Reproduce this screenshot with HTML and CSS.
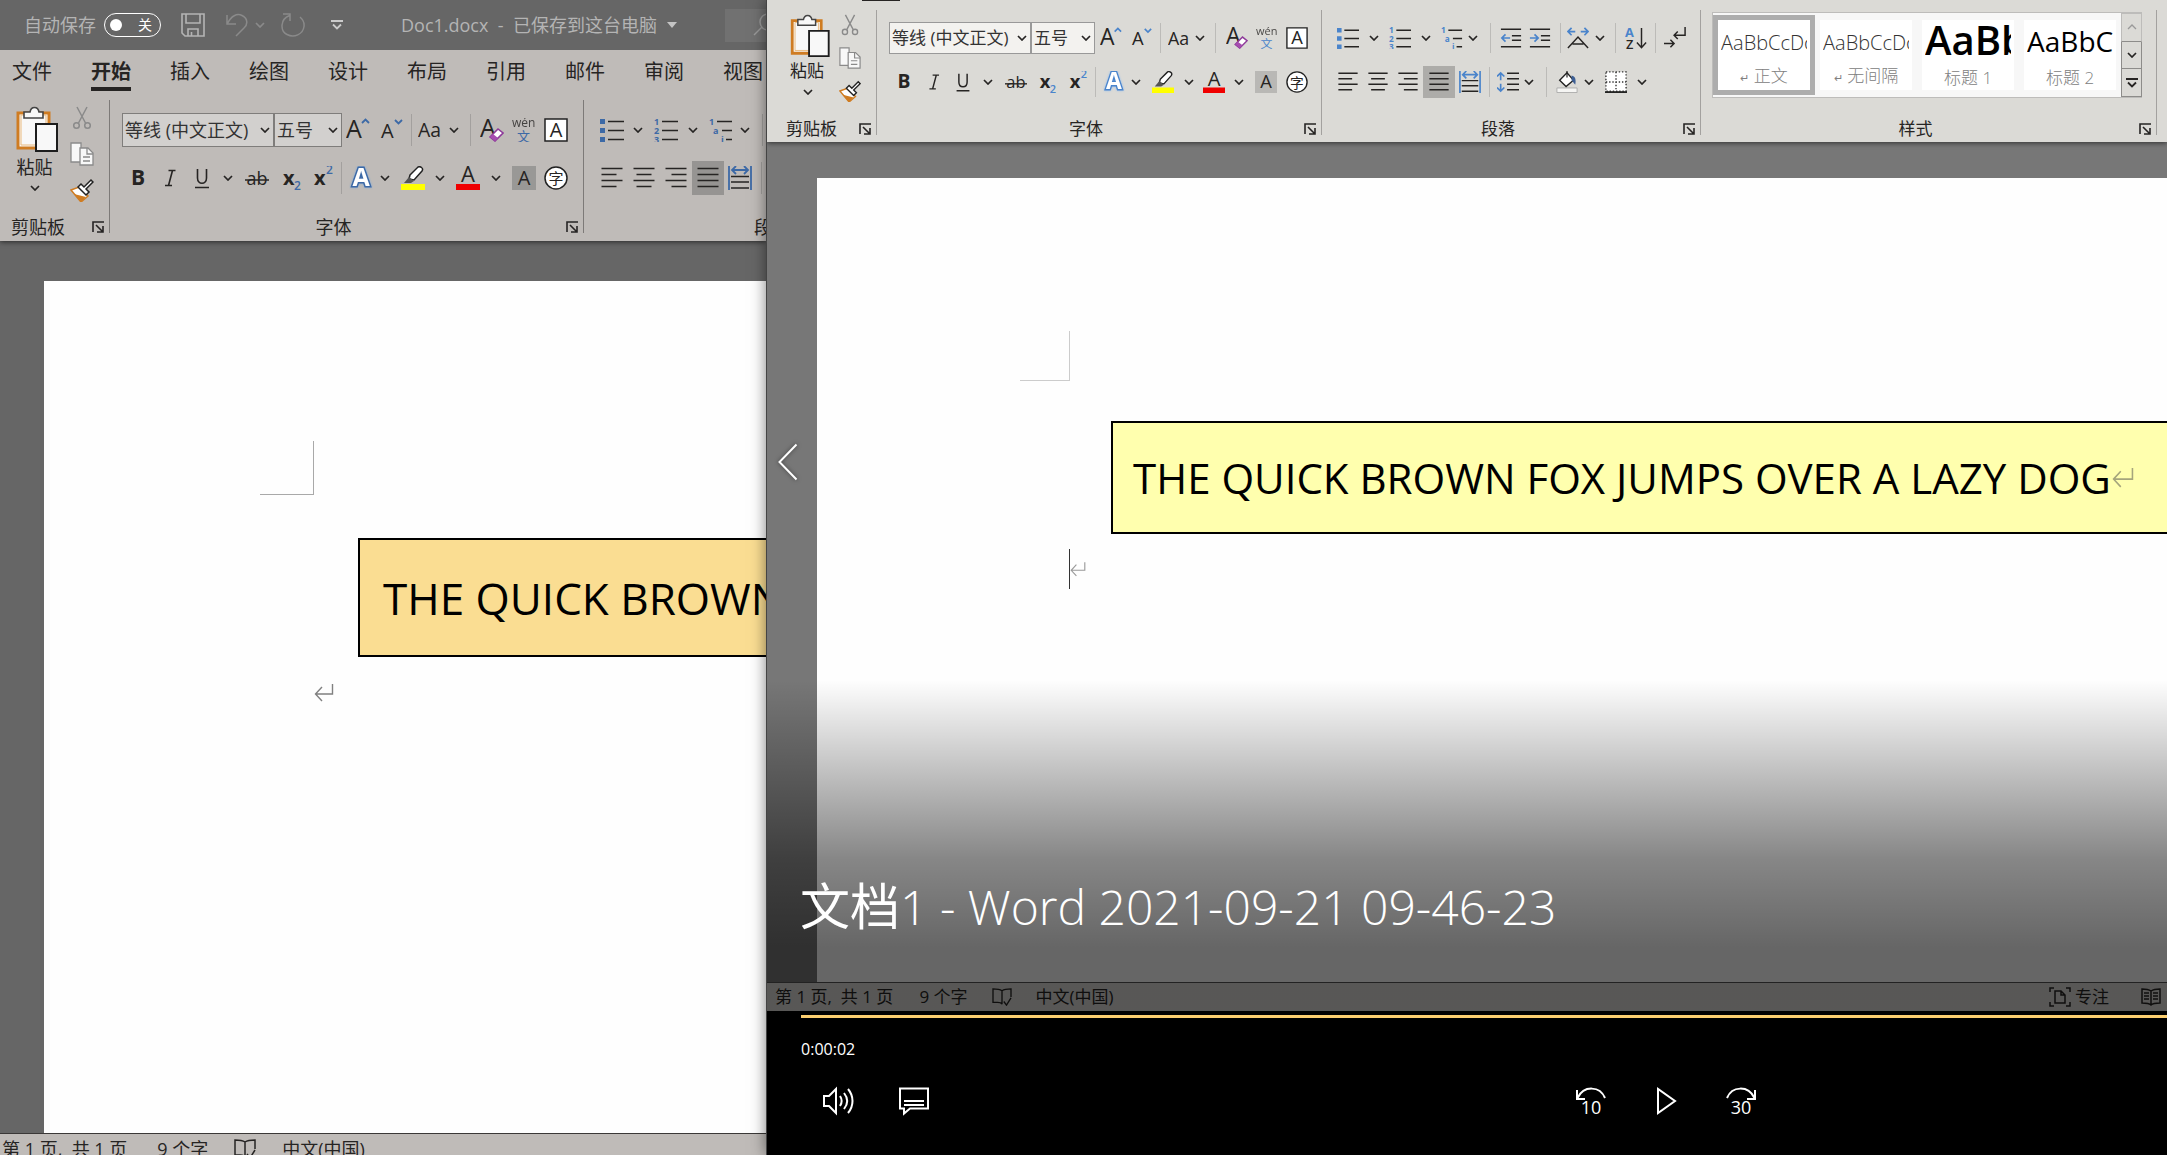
FILE: index.html
```html
<!DOCTYPE html>
<html lang="zh-CN">
<head>
<meta charset="utf-8">
<title>Doc1.docx</title>
<link rel="stylesheet" href="styles.css">
</head>
<body>
<svg class="defs" aria-hidden="true">
  <symbol id="chev" viewBox="0 0 10 6"><path d="M1 1l4 4 4-4" fill="none" stroke="currentColor" stroke-width="1.7"/></symbol>
  <symbol id="chev-up" viewBox="0 0 10 6"><path d="M1 5l4-4 4 4" fill="none" stroke="currentColor" stroke-width="1.3"/></symbol>
  <symbol id="more" viewBox="0 0 12 10"><path d="M0 1h12M2 4.500l4 4 4-4" fill="none" stroke="currentColor" stroke-width="1.800"/></symbol>
  <symbol id="launch" viewBox="0 0 12 12"><path d="M1 11V1h11M4 4l7 7M11 5v6H5" fill="none" stroke="currentColor" stroke-width="1.600"/></symbol>
  <symbol id="save" viewBox="0 0 24 24"><path d="M1 1h22v22H4l-3-3zM5 1v9h14V1M7 23v-7h10v7M10.500 23v-4" fill="none" stroke="currentColor" stroke-width="1.600"/></symbol>
  <symbol id="undo" viewBox="0 0 24 24"><path d="M2 2v9h9M2.500 10.500C6 3 12 0 17 2.500c6 3 6 9 2 12.500l-8 8" fill="none" stroke="currentColor" stroke-width="1.500"/></symbol>
  <symbol id="redo" viewBox="0 0 24 24"><path d="M2 1h7v7M8.500 2.500C-1 6-1 18 6 21.500c7 3.500 16 0 17-8 .5-4-1-7-4-9.500" fill="none" stroke="currentColor" stroke-width="1.500"/></symbol>
  <symbol id="search" viewBox="0 0 24 24"><circle cx="15" cy="9" r="8" fill="none" stroke="currentColor" stroke-width="1.500"/><path d="M9 14L1 22" stroke="currentColor" stroke-width="1.500"/></symbol>
  <symbol id="paste" viewBox="0 0 42 46"><path d="M2 7h31v35H2z" class="paper" stroke="#cf7c22" stroke-width="3"/><path d="M5 9h25v30H5z" class="paper" stroke="#e9b97c" stroke-width="1"/><path d="M8 12V6h6c1-6 8-6 9 0h4v6z" class="paper" stroke="#444" stroke-width="1.600"/><path d="M20 18h21v27H20z" class="paper" stroke="#1d1d1d" stroke-width="2"/></symbol>
  <symbol id="cut" viewBox="0 0 24 24"><path d="M7 1l8.500 16M17 1L8.500 17" stroke="#8a8a8a" stroke-width="1.500"/><circle cx="6.500" cy="19.500" r="2.800" fill="none" stroke="#8a8a8a" stroke-width="1.500"/><circle cx="17.500" cy="19.500" r="2.800" fill="none" stroke="#8a8a8a" stroke-width="1.500"/></symbol>
  <symbol id="copy" viewBox="0 0 24 24"><path d="M1 1h10v19H1z" class="paper" stroke="#8a8a8a" stroke-width="1.300"/><path d="M10 6h8l5 5v12H10z" class="paper" stroke="#8a8a8a" stroke-width="1.300"/><path d="M17 6v6h6M13 15h7M13 19h7" fill="none" stroke="#8a8a8a" stroke-width="1.300"/></symbol>
  <symbol id="painter" viewBox="0 0 24 24"><path d="M1 12l8-3 9 9-7 6z" fill="#fff" stroke="#cf7c22" stroke-width="1.500"/><path d="M4 16l12 3-5 5z" fill="#cf7c22"/><path d="M8 9l3-3 3 3 7-7 2 2-7 7 3 3-3 3z" fill="#fff" stroke="#222" stroke-width="1.500"/></symbol>
  <symbol id="grow" viewBox="0 0 24 24"><text x="0" y="20" font-size="25">A</text><path d="M16 5l3.500-3.500L23 5" class="bl"/></symbol>
  <symbol id="shrink" viewBox="0 0 24 24"><text x="1" y="20" font-size="20">A</text><path d="M15 2l3.500 3.500L22 2" class="bl"/></symbol>
  <symbol id="case" viewBox="0 0 26 24"><text x="0" y="20" font-size="21">Aa</text></symbol>
  <symbol id="clear" viewBox="0 0 24 24"><text x="0" y="19" font-size="25">A</text><path d="M10 19l8-8 5 4-8 8z" fill="#fff" stroke="#8e3a9a" stroke-width="1.600"/><path d="M10 19l3-3 5 4-3 3z" fill="#a64db0"/></symbol>
  <symbol id="wen" viewBox="0 0 24 24"><text x="0" y="9" font-size="12" opacity=".8">wén</text><text x="5" y="23" font-size="13" class="btx">文</text></symbol>
  <symbol id="abox" viewBox="0 0 24 24"><path d="M1 1h22v22H1z" fill="#fff" stroke="#222" stroke-width="1.500"/><text x="12" y="19" font-size="20" text-anchor="middle">A</text></symbol>
  <symbol id="bold" viewBox="0 0 24 24"><text x="12" y="19" font-size="21" font-weight="700" text-anchor="middle">B</text></symbol>
  <symbol id="italic" viewBox="0 0 24 24"><path d="M10.500 4.500h7M7 19.500h7M14.500 4.500l-4 15" fill="none" stroke="currentColor" stroke-width="1.600"/></symbol>
  <symbol id="underline" viewBox="0 0 24 24"><path d="M7.500 3v9c0 7 9 7 9 0V3M5 21.500h14" fill="none" stroke="currentColor" stroke-width="1.600"/></symbol>
  <symbol id="strike" viewBox="0 0 24 24"><text x="12" y="19" font-size="18" text-anchor="middle">ab</text><path d="M0 14h24" stroke="currentColor" stroke-width="1.500"/></symbol>
  <symbol id="sub" viewBox="0 0 24 24"><text x="3" y="19" font-size="20" font-weight="700">x</text><text x="14" y="24" font-size="12" font-weight="600" class="btx">2</text></symbol>
  <symbol id="sup" viewBox="0 0 24 24"><text x="3" y="19" font-size="20" font-weight="700">x</text><text x="15" y="8" font-size="12" font-weight="600" class="btx">2</text></symbol>
  <symbol id="effect" viewBox="0 0 24 24"><text x="12" y="20" font-size="25" font-weight="700" text-anchor="middle" class="fx">A</text></symbol>
  <symbol id="marker" viewBox="0 0 24 24"><path d="M0 18h24v6H0z" fill="#ff0"/><path d="M9 9l8-8c2-1 6 1 4 4l-8 9-5-1z" fill="#fff" stroke="#222" stroke-width="1.500"/><path d="M3 17l5-6 5 4-3 2z" fill="#555"/></symbol>
  <symbol id="color" viewBox="0 0 24 24"><path d="M0 18h24v6H0z" fill="#f00000"/><text x="12" y="16" font-size="22" text-anchor="middle">A</text></symbol>
  <symbol id="shade" viewBox="0 0 24 24"><path d="M0 0h24v24H0z" class="sh"/><text x="12" y="19" font-size="20" text-anchor="middle">A</text></symbol>
  <symbol id="ring" viewBox="0 0 24 24"><circle cx="12" cy="12" r="11" fill="#fff" stroke="#222" stroke-width="1.500"/><text x="12" y="18" font-size="15" text-anchor="middle">字</text></symbol>
  <symbol id="bullets" viewBox="0 0 24 24"><path d="M0 1h5v5H0zM0 10h5v5H0zM0 19h5v5H0z" class="bf"/><path d="M8 3.500h16M8 12.500h16M8 21.500h16" class="ln"/></symbol>
  <symbol id="numbers" viewBox="0 0 24 24"><g class="btx" font-size="9" font-weight="700"><text x="0" y="7">1</text><text x="0" y="16">2</text><text x="0" y="25">3</text></g><path d="M8 3.500h16M8 12.500h16M8 21.500h16" class="ln"/></symbol>
  <symbol id="multi" viewBox="0 0 24 24"><g class="btx" font-size="9" font-weight="700"><text x="0" y="7">1</text><text x="4" y="16">a</text><text x="12" y="25">i</text></g><path d="M8 3.500h15M13 12.500h10M17 21.500h6" class="ln"/></symbol>
  <symbol id="outdent" viewBox="0 0 24 24"><path d="M1 2.500h22M13 9.500h10M13 14.500h10M1 21.500h22" class="ln"/><path d="M11 12H2M6 8l-4 4 4 4" class="bl"/></symbol>
  <symbol id="indent" viewBox="0 0 24 24"><path d="M1 2.500h22M13 9.500h10M13 14.500h10M1 21.500h22" class="ln"/><path d="M1 12h9M6 8l4 4-4 4" class="bl"/></symbol>
  <symbol id="cjk" viewBox="0 0 24 24"><path d="M1 23L12 11l11 12M6 18.500h12" class="ln"/><path d="M1 5h8M5 1L1 5l4 4M15 5h8M19 1l4 4-4 4" class="bl"/></symbol>
  <symbol id="sort" viewBox="0 0 24 24"><text x="0" y="11" font-size="14" font-weight="700" class="btx">A</text><text x="1" y="24" font-size="14" font-weight="600">Z</text><path d="M18 1v21M13 17l5 5.500 5-5.500" class="ln"/></symbol>
  <symbol id="marks" viewBox="0 0 24 24"><path d="M23 0v9H11M15 5l-4 4 4 4M0 18h11M7 14l4 4-4 4" class="ln"/></symbol>
  <symbol id="al" viewBox="0 0 24 24"><path d="M1.500 2.500h21M1.500 8.500h15M1.500 14.500h21M1.500 20.500h15" class="ln"/></symbol>
  <symbol id="ac" viewBox="0 0 24 24"><path d="M1.500 2.500h21M4.500 8.500h15M1.500 14.500h21M4.500 20.500h15" class="ln"/></symbol>
  <symbol id="ar" viewBox="0 0 24 24"><path d="M1.500 2.500h21M7.500 8.500h15M1.500 14.500h21M7.500 20.500h15" class="ln"/></symbol>
  <symbol id="aj" viewBox="0 0 24 24"><path d="M1.500 2.500h21M1.500 8.500h21M1.500 14.500h21M1.500 20.500h21" class="ln"/></symbol>
  <symbol id="dist" viewBox="0 0 24 24"><path d="M3 10.500h18M3 16h18M3 22h18" class="ln"/><path d="M1 0v24M23 0v24M4 4h16M8 0L4 4l4 4M16 0l4 4-4 4" class="bl"/></symbol>
  <symbol id="spacing" viewBox="0 0 24 24"><path d="M11 2.500h13M11 8.500h13M11 14.500h13M11 20.500h13" class="ln"/><path d="M4 2v8M0 6l4-4 4 4M4 14v8M0 18l4 4 4-4" class="bl"/></symbol>
  <symbol id="bucket" viewBox="0 0 24 24"><path d="M1 18.500h22v5H1z" fill="#f5f5f3" stroke="#aaa"/><path d="M4 10l8-8 7 8-8 7z" fill="#fff" stroke="#222" stroke-width="1.500"/><path d="M12 0v7" stroke="#222" stroke-width="1.300"/><path d="M17 5c4 1 5 4 4 10l-4-5z" fill="#3d5f94"/></symbol>
  <symbol id="borders" viewBox="0 0 24 24"><path d="M1 1h22v21H1z" fill="#fff" stroke="#333" stroke-width="1.500" stroke-dasharray="1.500 2"/><path d="M12 1v21M1 12h22" stroke="#333" stroke-width="1.500" stroke-dasharray="1.500 2"/><path d="M0 23h24" stroke="#111" stroke-width="1.800"/></symbol>
  <symbol id="enter" viewBox="0 0 20 18"><path d="M18.500 0v10H2M8 3l-6.500 7L8 17" fill="none" stroke="currentColor" stroke-width="1.400"/></symbol>
  <symbol id="book" viewBox="0 0 22 20"><path d="M11 3C8 1 5 1 1 1v15h5c2 0 4 0 5 2M11 3v15M11 3c3-2 6-2 10-2v9M13 15l3 4 5-8" fill="none" stroke="currentColor" stroke-width="1.500"/></symbol>
  <symbol id="focus" viewBox="0 0 22 20"><path d="M5 1H1v4M17 1h4v4M5 19H1v-4M17 19h4v-4M6 4h6l4 4v8H6zM12 4v4h4" fill="none" stroke="currentColor" stroke-width="1.500"/></symbol>
  <symbol id="read" viewBox="0 0 20 18"><path d="M10 3C7 1 4 1 1 1v14c4 0 7 0 9 2 2-2 5-2 9-2V1c-3 0-6 0-9 2zM10 3v14M3 5h5M3 8h5M3 11h5M12 5h5M12 8h5M12 11h5" fill="none" stroke="currentColor" stroke-width="1.500"/></symbol>
</svg>

<main class="desktop">
  <section class="win" aria-label="Doc1.docx">
    <header class="titlebar">
      <span>自动保存</span>
      <label class="toggle"><input type="checkbox" aria-label="自动保存"><span>关</span></label>
      <button class="qa save" aria-label="保存"><svg><use href="#save"/></svg></button>
      <button class="qa undo dim" aria-label="撤消"><svg><use href="#undo"/></svg></button>
      <button class="qa drop dim" aria-label="撤消选项"><svg class="cv"><use href="#chev"/></svg></button>
      <button class="qa redo dim" aria-label="重复"><svg><use href="#redo"/></svg></button>
      <button class="qa custom" aria-label="自定义"><svg class="mo"><use href="#more"/></svg></button>
      <button class="docname">Doc1.docx&nbsp; -&nbsp; 已保存到这台电脑<i></i></button>
      <button class="searchbox" aria-label="搜索"><svg><use href="#search"/></svg></button>
    </header>
    <nav class="tabs">
      <a href="#">文件</a><a href="#" class="on">开始</a><a href="#">插入</a><a href="#">绘图</a><a href="#">设计</a><a href="#">布局</a><a href="#">引用</a><a href="#">邮件</a><a href="#">审阅</a><a href="#">视图</a>
    </nav>
    <div class="ribbon">
      <div class="group clip">
        <div class="clipbody">
          <button class="paste"><svg><use href="#paste"/></svg><span>粘贴</span><svg class="cv"><use href="#chev"/></svg></button>
          <div class="stack">
            <button aria-label="剪切"><svg class="ic"><use href="#cut"/></svg></button>
            <button aria-label="复制"><svg class="ic"><use href="#copy"/></svg></button>
            <button aria-label="格式刷"><svg class="ic"><use href="#painter"/></svg></button>
          </div>
        </div>
        <div class="foot"><span>剪贴板</span><button aria-label="剪贴板设置"><svg class="la"><use href="#launch"/></svg></button></div>
      </div>
      <div class="group font">
        <div class="row r1">
          <label class="combo"><select aria-label="字体"><option>等线 (中文正文)</option></select><svg class="cv"><use href="#chev"/></svg></label>
          <label class="combo"><select aria-label="字号"><option>五号</option></select><svg class="cv"><use href="#chev"/></svg></label>
          <button aria-label="增大字号"><svg class="ic"><use href="#grow"/></svg></button>
          <button aria-label="减小字号"><svg class="ic"><use href="#shrink"/></svg></button>
          <i class="sep"></i>
          <button aria-label="更改大小写"><svg class="ic"><use href="#case"/></svg></button>
          <button aria-label="大小写选项"><svg class="cv"><use href="#chev"/></svg></button>
          <i class="sep"></i>
          <button aria-label="清除格式"><svg class="ic"><use href="#clear"/></svg></button>
          <button aria-label="拼音指南"><svg class="ic"><use href="#wen"/></svg></button>
          <button aria-label="字符边框"><svg class="ic"><use href="#abox"/></svg></button>
        </div>
        <div class="row r2">
          <button aria-label="加粗"><svg class="ic"><use href="#bold"/></svg></button>
          <button aria-label="倾斜"><svg class="ic"><use href="#italic"/></svg></button>
          <button aria-label="下划线"><svg class="ic"><use href="#underline"/></svg></button>
          <button aria-label="下划线选项"><svg class="cv"><use href="#chev"/></svg></button>
          <button aria-label="删除线"><svg class="ic"><use href="#strike"/></svg></button>
          <button aria-label="下标"><svg class="ic"><use href="#sub"/></svg></button>
          <button aria-label="上标"><svg class="ic"><use href="#sup"/></svg></button>
          <i class="sep"></i>
          <button aria-label="文本效果"><svg class="ic"><use href="#effect"/></svg></button>
          <button aria-label="效果选项"><svg class="cv"><use href="#chev"/></svg></button>
          <button aria-label="突出显示"><svg class="ic"><use href="#marker"/></svg></button>
          <button aria-label="突出显示选项"><svg class="cv"><use href="#chev"/></svg></button>
          <button aria-label="字体颜色"><svg class="ic"><use href="#color"/></svg></button>
          <button aria-label="颜色选项"><svg class="cv"><use href="#chev"/></svg></button>
          <button aria-label="字符底纹"><svg class="ic"><use href="#shade"/></svg></button>
          <button aria-label="带圈字符"><svg class="ic"><use href="#ring"/></svg></button>
        </div>
        <div class="foot"><span>字体</span><button aria-label="字体设置"><svg class="la"><use href="#launch"/></svg></button></div>
      </div>
      <div class="group para">
        <div class="row r1">
          <button aria-label="项目符号"><svg class="ic"><use href="#bullets"/></svg></button>
          <button aria-label="符号选项"><svg class="cv"><use href="#chev"/></svg></button>
          <button aria-label="编号"><svg class="ic"><use href="#numbers"/></svg></button>
          <button aria-label="编号选项"><svg class="cv"><use href="#chev"/></svg></button>
          <button aria-label="多级列表"><svg class="ic"><use href="#multi"/></svg></button>
          <button aria-label="列表选项"><svg class="cv"><use href="#chev"/></svg></button>
          <i class="sep"></i>
        </div>
        <div class="row r2">
          <button aria-label="左对齐"><svg class="ic"><use href="#al"/></svg></button>
          <button aria-label="居中"><svg class="ic"><use href="#ac"/></svg></button>
          <button aria-label="右对齐"><svg class="ic"><use href="#ar"/></svg></button>
          <button class="pressed" aria-label="两端对齐"><svg class="ic"><use href="#aj"/></svg></button>
          <button aria-label="分散对齐"><svg class="ic"><use href="#dist"/></svg></button>
          <i class="sep"></i>
        </div>
        <div class="foot"><span>段落</span><button aria-label="段落设置"><svg class="la"><use href="#launch"/></svg></button></div>
      </div>
    </div>
    <div class="canvas">
      <article class="page">
        <div class="corner"></div>
        <p class="textbox">THE QUICK BROWN FOX JUMPS OVER A LAZY DOG</p>
        <p class="para-end"><svg class="en"><use href="#enter"/></svg></p>
      </article>
    </div>
    <footer class="status"><span>第 1 页,&nbsp; 共 1 页</span><span>9 个字</span><svg class="bk"><use href="#book"/></svg><span>中文(中国)</span></footer>
  </section>

  <section class="player" aria-label="视频">
    <div class="video">
      <div class="ribbon">
        <i class="tabmark"></i>
        <div class="group clip">
          <div class="clipbody">
            <button class="paste"><svg><use href="#paste"/></svg><span>粘贴</span><svg class="cv"><use href="#chev"/></svg></button>
            <div class="stack">
              <button aria-label="剪切"><svg class="ic"><use href="#cut"/></svg></button>
              <button aria-label="复制"><svg class="ic"><use href="#copy"/></svg></button>
              <button aria-label="格式刷"><svg class="ic"><use href="#painter"/></svg></button>
            </div>
          </div>
          <div class="foot"><span>剪贴板</span><button aria-label="剪贴板设置"><svg class="la"><use href="#launch"/></svg></button></div>
        </div>
        <div class="group font">
          <div class="row r1">
            <label class="combo"><select aria-label="字体"><option>等线 (中文正文)</option></select><svg class="cv"><use href="#chev"/></svg></label>
            <label class="combo"><select aria-label="字号"><option>五号</option></select><svg class="cv"><use href="#chev"/></svg></label>
            <button aria-label="增大字号"><svg class="ic"><use href="#grow"/></svg></button>
            <button aria-label="减小字号"><svg class="ic"><use href="#shrink"/></svg></button>
            <i class="sep"></i>
            <button aria-label="更改大小写"><svg class="ic"><use href="#case"/></svg></button>
            <button aria-label="大小写选项"><svg class="cv"><use href="#chev"/></svg></button>
            <i class="sep"></i>
            <button aria-label="清除格式"><svg class="ic"><use href="#clear"/></svg></button>
            <button aria-label="拼音指南"><svg class="ic"><use href="#wen"/></svg></button>
            <button aria-label="字符边框"><svg class="ic"><use href="#abox"/></svg></button>
          </div>
          <div class="row r2">
            <button aria-label="加粗"><svg class="ic"><use href="#bold"/></svg></button>
            <button aria-label="倾斜"><svg class="ic"><use href="#italic"/></svg></button>
            <button aria-label="下划线"><svg class="ic"><use href="#underline"/></svg></button>
            <button aria-label="下划线选项"><svg class="cv"><use href="#chev"/></svg></button>
            <button aria-label="删除线"><svg class="ic"><use href="#strike"/></svg></button>
            <button aria-label="下标"><svg class="ic"><use href="#sub"/></svg></button>
            <button aria-label="上标"><svg class="ic"><use href="#sup"/></svg></button>
            <i class="sep"></i>
            <button aria-label="文本效果"><svg class="ic"><use href="#effect"/></svg></button>
            <button aria-label="效果选项"><svg class="cv"><use href="#chev"/></svg></button>
            <button aria-label="突出显示"><svg class="ic"><use href="#marker"/></svg></button>
            <button aria-label="突出显示选项"><svg class="cv"><use href="#chev"/></svg></button>
            <button aria-label="字体颜色"><svg class="ic"><use href="#color"/></svg></button>
            <button aria-label="颜色选项"><svg class="cv"><use href="#chev"/></svg></button>
            <button aria-label="字符底纹"><svg class="ic"><use href="#shade"/></svg></button>
            <button aria-label="带圈字符"><svg class="ic"><use href="#ring"/></svg></button>
          </div>
          <div class="foot"><span>字体</span><button aria-label="字体设置"><svg class="la"><use href="#launch"/></svg></button></div>
        </div>
        <div class="group para">
          <div class="row r1">
            <button aria-label="项目符号"><svg class="ic"><use href="#bullets"/></svg></button>
            <button aria-label="符号选项"><svg class="cv"><use href="#chev"/></svg></button>
            <button aria-label="编号"><svg class="ic"><use href="#numbers"/></svg></button>
            <button aria-label="编号选项"><svg class="cv"><use href="#chev"/></svg></button>
            <button aria-label="多级列表"><svg class="ic"><use href="#multi"/></svg></button>
            <button aria-label="列表选项"><svg class="cv"><use href="#chev"/></svg></button>
            <i class="sep"></i>
            <button aria-label="减少缩进"><svg class="ic"><use href="#outdent"/></svg></button>
            <button aria-label="增加缩进"><svg class="ic"><use href="#indent"/></svg></button>
            <i class="sep"></i>
            <button aria-label="中文版式"><svg class="ic"><use href="#cjk"/></svg></button>
            <button aria-label="版式选项"><svg class="cv"><use href="#chev"/></svg></button>
            <i class="sep"></i>
            <button aria-label="排序"><svg class="ic"><use href="#sort"/></svg></button>
            <i class="sep"></i>
            <button aria-label="显示编辑标记"><svg class="ic"><use href="#marks"/></svg></button>
          </div>
          <div class="row r2">
            <button aria-label="左对齐"><svg class="ic"><use href="#al"/></svg></button>
            <button aria-label="居中"><svg class="ic"><use href="#ac"/></svg></button>
            <button aria-label="右对齐"><svg class="ic"><use href="#ar"/></svg></button>
            <button class="pressed" aria-label="两端对齐"><svg class="ic"><use href="#aj"/></svg></button>
            <button aria-label="分散对齐"><svg class="ic"><use href="#dist"/></svg></button>
            <i class="sep"></i>
            <button aria-label="行距"><svg class="ic"><use href="#spacing"/></svg></button>
            <button aria-label="行距选项"><svg class="cv"><use href="#chev"/></svg></button>
            <i class="sep"></i>
            <button aria-label="底纹"><svg class="ic"><use href="#bucket"/></svg></button>
            <button aria-label="底纹选项"><svg class="cv"><use href="#chev"/></svg></button>
            <button aria-label="边框"><svg class="ic"><use href="#borders"/></svg></button>
            <button aria-label="边框选项"><svg class="cv"><use href="#chev"/></svg></button>
          </div>
          <div class="foot"><span>段落</span><button aria-label="段落设置"><svg class="la"><use href="#launch"/></svg></button></div>
        </div>
        <div class="group styles">
          <div class="gallery">
            <button class="style sel"><b>AaBbCcDc</b><span><small>↵</small> 正文</span></button>
            <button class="style"><b>AaBbCcDc</b><span><small>↵</small> 无间隔</span></button>
            <button class="style h1"><b>AaBb</b><span>标题 1</span></button>
            <button class="style h2"><b>AaBbC</b><span>标题 2</span></button>
            <div class="scroll">
              <button class="off" aria-label="上一行"><svg class="cv"><use href="#chev-up"/></svg></button>
              <button aria-label="下一行"><svg class="cv"><use href="#chev"/></svg></button>
              <button aria-label="其他"><svg class="mo"><use href="#more"/></svg></button>
            </div>
          </div>
          <div class="foot"><span>样式</span><button aria-label="样式设置"><svg class="la"><use href="#launch"/></svg></button></div>
        </div>
      </div>
      <div class="canvas">
        <article class="page">
          <div class="corner"></div>
          <p class="textbox">THE QUICK BROWN FOX JUMPS OVER A LAZY DOG<svg class="en"><use href="#enter"/></svg></p>
          <p class="para-end"><i class="caret"></i><svg class="en"><use href="#enter"/></svg></p>
        </article>
      </div>
      <footer class="status"><span>第 1 页,&nbsp; 共 1 页</span><span>9 个字</span><svg class="bk"><use href="#book"/></svg><span>中文(中国)</span><svg class="fo"><use href="#focus"/></svg><span class="fotext">专注</span><svg class="rd"><use href="#read"/></svg></footer>
      <div class="dimmer"></div>
      <h1 class="vtitle"><b>文档</b>1 - Word 2021-09-21 09-46-23</h1>
    </div>
    <button class="back" aria-label="返回"><svg viewBox="0 0 22 38"><path d="M19.500 1.500L2.500 19l17 17.500" fill="none" stroke="#fff" stroke-width="2"/></svg></button>
    <div class="controls">
      <input class="seek" type="range" aria-label="进度">
      <time>0:00:02</time>
      <div class="buttons">
        <div class="side">
          <button aria-label="音量"><svg viewBox="0 0 32 28"><path d="M1 9h5l7-7v24l-7-7H1zM17 9c2 3 2 7 0 10M21 6c4 5 4 11 0 16M25 2c6 7 6 17 0 24" fill="none" stroke="#fff" stroke-width="2"/></svg></button>
          <button aria-label="字幕"><svg viewBox="0 0 32 28"><path d="M2 1.500h28v20H12l-6 5v-5H2zM6 14h20M6 18h20" fill="none" stroke="#fff" stroke-width="2"/></svg></button>
        </div>
        <div class="transport">
          <button aria-label="后退 10 秒"><svg viewBox="0 0 32 28"><path d="M2 3v9h8M2.500 11C9-2 25-1 30 11" fill="none" stroke="#fff" stroke-width="2"/><text x="16" y="27" font-size="18" text-anchor="middle">10</text></svg></button>
          <button aria-label="播放"><svg viewBox="0 0 32 28"><path d="M8 2v24l17-12z" fill="none" stroke="#fff" stroke-width="2"/></svg></button>
          <button aria-label="前进 30 秒"><svg viewBox="0 0 32 28"><path d="M30 3v9h-8M29.500 11C23-2 7-1 2 11" fill="none" stroke="#fff" stroke-width="2"/><text x="16" y="27" font-size="18" text-anchor="middle">30</text></svg></button>
        </div>
      </div>
    </div>
  </section>
</main>
</body>
</html>
```
FILE: styles.css
```css
* { box-sizing: border-box; }
body {
  margin: 0;
  background: #000;
  font-family: "Open Sans", "Noto Sans CJK SC", sans-serif;
  font-size: 18px;
  line-height: 24px;
  color: #262423;
}
p, h1 { margin: 0; font-weight: 400; }
button {
  border: 0;
  padding: 0;
  background: none;
  font: inherit;
  color: inherit;
  display: flex;
  align-items: center;
  justify-content: center;
}
a { color: inherit; text-decoration: none; }
svg { display: block; flex: none; overflow: visible; }
svg text { font-family: "Open Sans", "Noto Sans CJK SC", sans-serif; fill: currentColor; }
.defs { display: none; }

/* icon parts */
.bl { fill: none; stroke: var(--blue); stroke-width: 1.8px; }
.bf, svg .btx, svg .btx text { fill: var(--blue); }
.ln { fill: none; stroke: currentColor; stroke-width: 1.6px; }
.paper { fill: #f8f8f8; }
.sh { fill: var(--shade); }
svg .fx {
  fill: #fff;
  stroke: var(--blue);
  stroke-width: 3px;
  paint-order: stroke;
  filter: drop-shadow(0 0 1px var(--glow));
}
.ic { width: var(--ic); height: var(--ic); }
.cv { width: 10px; height: 6px; }
.mo { width: 12px; height: 10px; }
.la { width: 12px; height: 12px; }

.desktop {
  display: grid;
  grid-template-columns: 35.35% minmax(0, 1fr);
  height: 100vh;
  overflow: hidden;
}

/* document window */
.win {
  --ic: 24px;
  --blue: #3c69a6;
  --glow: #7fa9d8;
  --shade: #999896;
  display: flex;
  flex-direction: column;
  min-width: 0;
  overflow: hidden;
  background: #666;
}
.titlebar {
  display: flex;
  align-items: center;
  height: 50px;
  flex: none;
  padding-left: 24px;
  color: #b4b4b4;
  white-space: nowrap;
}
.toggle {
  display: flex;
  align-items: center;
  justify-content: space-between;
  width: 57px;
  height: 24px;
  margin-left: 8px;
  padding: 0 8px 0 5px;
  border: 1px solid #fff;
  border-radius: 12px;
  color: #fff;
  font-size: 14px;
}
.toggle input {
  appearance: none;
  width: 12px;
  height: 12px;
  margin: 0;
  border-radius: 50%;
  background: #fff;
}
.qa svg { width: 24px; height: 24px; }
.qa .cv { width: 10px; height: 6px; }
.qa .mo { width: 12px; height: 10px; }
.save { margin-left: 20px; }
.undo { margin-left: 20px; }
.drop { margin-left: 6px; }
.redo { margin-left: 16px; }
.custom { margin-left: 26px; color: #ccc; }
.dim { color: #8a8a8a; }
.docname { margin-left: 58px; flex: none; }
.docname i {
  margin-left: 10px;
  border: 5px solid transparent;
  border-top: 6px solid #c4c4c4;
  border-bottom: 0;
}
.searchbox {
  margin-left: auto;
  width: 41px;
  height: 33px;
  flex: none;
  justify-content: flex-start;
  padding-left: 28px;
  background: #717171;
  color: #9a9a9a;
}
.searchbox svg { width: 24px; height: 24px; }
.tabs {
  position: relative;
  z-index: 2;
  display: flex;
  gap: 39px;
  height: 50px;
  flex: none;
  padding: 8px 0 0 12px;
  background: #bfbbb8;
  font-size: 20px;
  line-height: 28px;
  white-space: nowrap;
}
.tabs a { height: 33px; flex: none; }
.tabs .on { font-weight: 700; border-bottom: 4px solid #262423; }

/* ribbon */
.ribbon {
  display: flex;
  flex: none;
  background: #bfbbb8;
  box-shadow: 0 1px 5px rgba(0, 0, 0, .6);
  z-index: 1;
}
.group {
  flex: none;
  padding: 13px 0 0 12px;
  background: linear-gradient(#7d7a78, #7d7a78) right 0 top 0 / 1px 133px no-repeat;
}
.row { display: grid; align-items: center; justify-items: center; height: 34px; }
.row + .row { margin-top: 14px; }
.row button { width: 100%; height: 100%; }
.row .pressed { background: #969492; }
.sep { width: 1px; height: 32px; background: #a3a09e; }
.foot { display: flex; align-items: center; height: 28px; margin-top: 18px; }
.foot span { flex: 1; text-align: center; white-space: nowrap; }
.foot button { width: 14px; margin-right: 5px; }
.combo { display: grid; align-items: center; width: 100%; height: 100%; }
.combo select {
  grid-area: 1 / 1;
  appearance: none;
  width: 100%;
  height: 100%;
  margin: 0;
  padding: 0 0 0 2px;
  border: 1px solid #7f7d7b;
  border-radius: 0;
  background: #d2d0ce;
  font: inherit;
  color: #333;
}
.combo .cv { grid-area: 1 / 1; justify-self: end; margin-right: 4px; pointer-events: none; }

.clip { width: 110px; padding: 6px 0 0 13px; }
.clipbody { display: flex; gap: 10px; height: 102px; }
.paste { flex-direction: column; justify-content: flex-start; width: 47px; }
.paste svg { width: 42px; height: 46px; }
.paste span { margin: 3px 4px 6px 0; }
.paste .cv { width: 10px; height: 6px; margin-right: 4px; }
.stack { display: flex; flex-direction: column; gap: 12px; }
.clip .foot { margin: 5px 0 0 -2px; }
.foot span { padding-right: 8px; }
.clip .foot span { text-align: left; padding: 0; }
.font { width: 474px; }
.font .r1 { grid-template-columns: 152px 68px 32px 36px 2px 36px 12px 20px 24px 40px 24px; }
.font .r2 { grid-template-columns: 32px 32px 32px 20px 38px 32px 30px 6px 34px 14px 42px 12px 44px 12px 44px 20px; }
.para { width: 403px; }
.font .foot, .para .foot { margin-left: -12px; }
.para .r1 { grid-template-columns: 32px 20px 36px 18px 38px 10px 24px; }
.para .r2 { grid-template-columns: 32px 32px 32px 32px 32px 10px; }

/* document */
.canvas { flex: 1; min-height: 0; display: flex; padding: 40px 0 0 44px; background: #666; overflow: hidden; }
.page { flex: 1; min-width: 0; padding: 160px 0 0 216px; background: #fefefe; }
.corner { width: 54px; height: 54px; border: solid #a9a9a9; border-width: 0 1px 1px 0; }
.textbox {
  display: flex;
  align-items: center;
  height: 119px;
  margin: 43px 0 0 98px;
  padding-left: 23px;
  border: 2px solid #000;
  border-right: 0;
  background: #fadd92;
  color: #000;
  font-size: 44px;
  line-height: 60px;
  white-space: nowrap;
  overflow: hidden;
}
.para-end { display: flex; margin: 27px 0 0 54px; color: #808080; }
.en { width: 20px; height: 18px; }
.status {
  display: flex;
  align-items: center;
  height: 22px;
  flex: none;
  padding: 8px 0 0 2px;
  border-top: 1px solid #3a3837;
  background: #bfbbb8;
  line-height: 24px;
  white-space: nowrap;
}
.status span + span { margin-left: 30px; }
.bk { width: 22px; height: 20px; margin: 0 26px; }

/* player */
.player {
  --ic: 22px;
  --blue: #4a84cb;
  --glow: #8fbcf0;
  --shade: #b9b8b5;
  position: relative;
  z-index: 3;
  display: flex;
  flex-direction: column;
  min-width: 0;
  border-left: 1px solid #444;
  background: #000;
  box-shadow: 0 0 14px rgba(0, 0, 0, .5);
}
.video { position: relative; flex: 1; min-height: 0; display: flex; flex-direction: column; overflow: hidden; }
.player .ribbon { position: relative; background: #dbdad6; font-size: 17px; }
.tabmark { position: absolute; left: 95px; top: 0; width: 38px; height: 1px; background: #262423; }
.player .group {
  padding: 22px 0 0 12px;
  background: linear-gradient(#a3a19f, #a3a19f) right 0 top 10px / 1px 125px no-repeat;
}
.player .row { height: 32px; }
.player .row + .row { margin-top: 12px; }
.player .row .pressed { background: #adaca9; }
.player .sep { height: 30px; background: #bcbbb8; }
.player .foot { height: 26px; }
.player .combo select { background: #f3f2ef; border-color: #999; }
.player .clip { width: 110px; padding: 14px 0 0 21px; }
.player .clipbody { gap: 7px; height: 94px; }
.player .paste { width: 44px; }
.player .paste > svg:first-child { width: 40px; height: 43px; }
.player .paste span { margin: 2px 6px 6px 0; }
.player .stack { gap: 11px; }
.player .clip .foot { margin: 8px 0 0 -2px; }
.player .font { width: 445px; }
.player .font .r1 { grid-template-columns: 142px 64px 32px 30px 6px 32px 10px 20px 24px 36px 24px; }
.player .font .r2 { grid-template-columns: 30px 30px 28px 22px 34px 30px 30px 4px 34px 10px 44px 8px 42px 8px 46px 16px; }
.player .para { width: 379px; }
.player .para .r1 { grid-template-columns: 30px 22px 30px 22px 30px 12px 22px 20px 38px 2px 34px 10px 20px 22px 16px 24px; }
.player .para .r2 { grid-template-columns: 30px 30px 30px 32px 30px 8px 30px 12px 22px 20px 24px 30px 22px; }
.player .para { padding-left: 11px; }
.player .para .foot { margin-left: -11px; }
.player .styles { width: 456px; padding-top: 12px; padding-left: 11px; }
.player .styles .foot { margin: 18px 0 0 -11px; }
.gallery {
  display: flex;
  width: 430px;
  height: 86px;
  border: 1px solid #bdbcba;
  border-right: 0;
  background: #f7f7f7;
}
.style {
  flex: 1;
  flex-direction: column;
  justify-content: flex-start;
  height: 80px;
  margin-top: 2px;
  border: 5px solid #f7f7f7;
  background: #fff;
  overflow: hidden;
}
.style.sel { border-color: #adadad; }
.style b {
  align-self: flex-start;
  height: 46px;
  margin-left: 3px;
  width: 86px;
  overflow: hidden;
  text-align: left;
  white-space: nowrap;
  font-size: 20px;
  line-height: 46px;
  font-weight: 300;
  color: #333;
}
.style span { color: #808080; line-height: 24px; white-space: nowrap; font-weight: 300; }
.style small { font-size: 11px; }
.h1 b { font-size: 40px; font-weight: 600; line-height: 40px; color: #000; }
.h2 b { font-size: 28px; line-height: 42px; color: #000; font-weight: 400; }
.scroll { display: flex; flex-direction: column; width: 21px; }
.scroll button { flex: 1; border: 1px solid #8d8c8a; background: #dbdad6; }
.scroll button + button { border-top: 0; }
.scroll .off { color: #999; border-color: #bdbcba; border-bottom-color: #8d8c8a; }
.player .canvas { padding: 36px 0 0 50px; background: #777; }
.player .page { padding: 153px 0 0 203px; }
.player .corner { width: 50px; height: 50px; border-color: #ccc; }
.player .textbox {
  height: 113px;
  margin: 40px 0 0 91px;
  padding-left: 20px;
  background: #ffffae;
  font-size: 42px;
}
.textbox .en { width: 24px; height: 20px; color: #a5a57c; }
.player .para-end { align-items: center; height: 40px; margin: 15px 0 0 49px; }
.para-end .caret { width: 1px; height: 40px; background: #333; }
.player .para-end .en { width: 16px; height: 15px; color: #999; }
.player .status { height: 29px; padding: 0 6px 0 8px; background: #dbdad6; font-size: 17px; border-top-color: #555; }
.player .status span + span { margin-left: 26px; }
.player .status .bk { width: 20px; height: 18px; margin: 0 24px; }
.fo { width: 22px; height: 20px; margin-left: auto; }
.player .status .fotext { margin: 0 32px 0 4px; }
.rd { width: 20px; height: 18px; }
.dimmer {
  position: absolute;
  inset: 680px 0 0 0;
  background: linear-gradient(rgba(0, 0, 0, 0), rgba(0, 0, 0, .47) 54%, rgba(0, 0, 0, .6) 81%);
}
.vtitle {
  position: absolute;
  left: 33px;
  bottom: 68px;
  color: #fff;
  font-size: 48px;
  line-height: 72px;
  font-weight: 300;
  white-space: nowrap;
}
.vtitle b { font-size: 50px; font-weight: 400; }
.back { position: absolute; left: 10px; top: 40%; margin-top: -19px; filter: drop-shadow(0 0 2px rgba(0, 0, 0, .5)); }
.back svg { width: 22px; height: 38px; }
.controls { flex: none; height: 144px; padding: 4px 0 0 34px; color: #fff; }
.seek { appearance: none; display: block; width: 100%; height: 3px; margin: 0; background: #fccf70; }
.seek::-webkit-slider-thumb { appearance: none; width: 0; height: 0; }
.controls time { display: block; margin-top: 19px; font-size: 16px; line-height: 24px; }
.buttons { display: flex; margin-top: 20px; padding-left: 18px; }
.buttons button { width: 40px; height: 40px; }
.buttons svg { width: 32px; height: 28px; }
.buttons svg text { fill: #fff; }
.side { display: flex; gap: 35px; width: calc(56% - 3px); }
.transport { display: flex; gap: 35px; }
```
